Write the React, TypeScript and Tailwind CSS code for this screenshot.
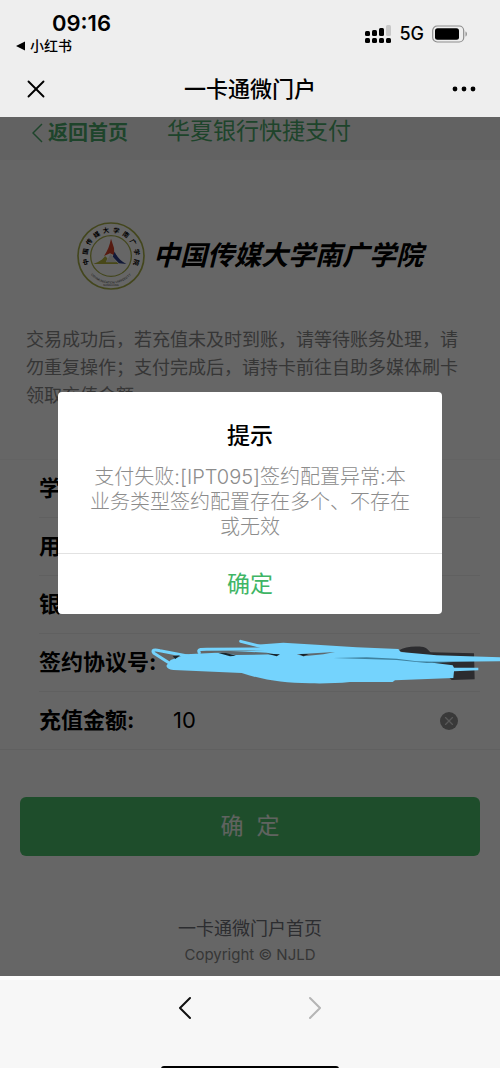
import React from 'react';
import { X } from 'lucide-react';

const logoChars = ['中', '国', '传', '媒', '大', '学', '南', '广', '学', '院'];

const hiddenRows = ['学', '用', '银'];

const StatusBar = () => {
  return <div className="flex h-15 items-start justify-between pl-4 pr-8">
      <div>
        <div className="mt-2 pl-9 text-[22px] leading-[30px] font-semibold">09:16</div>
        <div className="flex h-4 items-center gap-1 text-sm leading-5 font-medium">
          <svg className="h-2.5 w-2.5" viewBox="0 0 10 10">
            <path d="M0 5 9 0.5V9.5Z" fill="#000" />
          </svg>
          小红书
        </div>
      </div>
      <div className="mt-5 flex h-7 items-center gap-2">
        <svg className="h-5 w-[26px]" viewBox="0 0 26 20">
          <rect x="0" y="7" width="5" height="5" rx="1.5" />
          <rect x="7" y="6" width="5" height="6" rx="1.5" />
          <rect x="14" y="4" width="5" height="8" rx="1.5" />
          <rect x="21" y="1" width="5" height="11" rx="1.5" fill="#c8c8c8" />
          <rect x="0" y="14" width="5" height="5" rx="1.5" />
          <rect x="7" y="14" width="5" height="5" rx="1.5" />
          <rect x="14" y="14" width="5" height="5" rx="1.5" />
          <rect x="21" y="14" width="5" height="5" rx="1.5" />
        </svg>
        <span className="text-lg font-medium">5G</span>
        <svg className="h-[18px] w-9" viewBox="0 0 36 18">
          <rect x="0.7" y="1" width="31" height="16" rx="4.5" fill="none" stroke="#8d8d8d" strokeWidth="1.2" />
          <rect x="3" y="3.3" width="24" height="11.4" rx="2.5" />
          <path d="M33.5 6.5C35.4 7 35.4 11 33.5 11.5Z" fill="#8d8d8d" />
        </svg>
      </div>
    </div>;
};

const NavBar = () => {
  return <header className="grid h-[57px] grid-cols-[1fr_auto_1fr] items-center px-6">
      <button type="button" aria-label="关闭" className="justify-self-start">
        <X className="h-6 w-6 scale-125" strokeWidth={1.5} />
      </button>
      <h1 className="text-[22px] leading-7 font-medium">一卡通微门户</h1>
      <button type="button" aria-label="更多" className="justify-self-end">
        <svg className="h-6 w-6" viewBox="0 0 24 24">
          <circle cx="3" cy="12" r="2.4" />
          <circle cx="12" cy="12" r="2.4" />
          <circle cx="21" cy="12" r="2.4" />
        </svg>
      </button>
    </header>;
};

const Emblem = () => {
  return <svg className="h-[68px] w-[68px] shrink-0" viewBox="0 0 204 204">
      <circle cx="102" cy="102" r="99" fill="none" stroke="#a9b04a" strokeWidth="5" />
      <circle cx="102" cy="102" r="61" fill="none" stroke="#a9b04a" strokeWidth="4" />
      {logoChars.map((char, i) => <text key={i} x="102" y="31" fontSize="19" fontWeight="700" textAnchor="middle" transform={`rotate(${-103 + i * 23} 102 102)`}>
          {char}
        </text>)}
      <path id="emblem-arc" d="M31 144A82 82 0 0 0 173 144" fill="none" />
      <text fontSize="9" fill="#444">
        <textPath href="#emblem-arc" startOffset="50%" textAnchor="middle">COMMUNICATION UNIVERSITY</textPath>
      </text>
      <text x="102" y="192" fontSize="8" fill="#555" textAnchor="middle">NANGUANG</text>
      <path d="M102 50C98 70 92 86 81 102L99 94 112 100 111 78Z" fill="#d8452c" />
      <path d="M49 126C68 119 78 112 84 102L91 109 87 120H119L125 126Z" fill="#b3b43c" />
      <path d="M113 89C120 106 132 118 148 126L126 124 107 104Z" fill="#2d3f8c" />
      <path d="M101 95 87 121H119Z" fill="#e4e4df" />
    </svg>;
};

// hand-drawn marker hiding the agreement number
const Scribble = () => {
  return <svg className="pointer-events-none absolute -top-1 right-0 z-20 h-[60px] w-[350px]" viewBox="0 0 1050 180">
      <path d="M745 62C765 50 790 48 820 51C832 54 836 62 842 67L972 70 974 148 905 150 840 90Z" fill="#2c2c2f" />
      <path d="M50 106 62 90 108 73 200 68 345 60 318 44 400 38 500 44 620 52 745 57 752 66 860 76 1050 82V94L830 96 908 106 912 113 985 113V121L912 124 910 144 735 151 728 156 600 156C560 160 520 161 480 160C400 160 340 150 275 129L70 120C56 118 48 112 50 106Z" fill="#74d3fd" />
      <g fill="none" stroke="#74d3fd" strokeLinecap="round" strokeLinejoin="round" strokeWidth="9">
        <path d="M66 104 12 70C4 60 12 58 30 62L112 78" />
        <path d="M148 68C142 58 152 58 170 58L350 57" />
        <path d="M272 34 350 54" />
      </g>
      <path d="M176 64 290 65 350 68 375 73 255 75 222 70Z" fill="#5f696e" />
      <path d="M440 73 555 66 520 73 460 79Z" fill="#5f696e" />
      <path d="M205 69 228 69 258 77 240 79ZM352 71 390 73 380 79ZM448 72 476 72 460 79Z" fill="#17242c" />
      <path d="M550 84 650 82 740 86 800 94 910 97 830 99 740 90Z" fill="#3f819e" />
      <path d="M68 79 90 76 76 87Z" fill="#17242c" />
    </svg>;
};

const PaymentForm = () => {
  return <form>
      <div className="mt-[49px] border-t border-[#f7f7f7]">
        {hiddenRows.map(label => <div key={label} className="ml-[39px] mr-5 flex h-[58px] items-center border-b border-[#f0f0f0] text-[22px] font-bold">
            {label}
          </div>)}
        <div className="relative pl-[39px] pr-5">
          <div className="flex h-[58px] items-center border-b border-[#f0f0f0] text-[22px] font-bold">签约协议号:</div>
          <Scribble />
        </div>
        <div className="flex h-[58px] items-center border-b border-[#f0f0f0] pl-[39px] pr-[42px]">
          <label htmlFor="amount" className="w-[134px] shrink-0 text-[22px] font-bold">充值金额:</label>
          <input id="amount" type="text" defaultValue="10" className="min-w-0 flex-1 bg-transparent text-[22px] outline-none" />
          <button type="button" aria-label="清除" className="flex h-[18px] w-[18px] items-center justify-center rounded-full bg-[#8f8f8f] text-[#ddd]">
            <X className="h-3.5 w-3.5" strokeWidth={2} />
          </button>
        </div>
      </div>
      <button type="button" className="mx-5 mt-[47px] flex h-[59px] w-[calc(100%-40px)] items-center justify-center rounded-md bg-[#4dc16c] text-[23px] whitespace-pre text-[#f0f8f0]">
        确  定
      </button>
    </form>;
};

const AlertDialog = () => {
  return <div className="absolute inset-0 z-10 flex items-start justify-center bg-black/60 px-[58px] pt-[275px]">
      <div role="alertdialog" aria-labelledby="alert-title" className="w-full rounded bg-white text-center">
        <h2 id="alert-title" className="pt-7 text-[23px] leading-8 font-medium">提示</h2>
        <p className="mt-[13px] mb-[13px] px-8 text-xl leading-[25px] font-light text-[#8c8c8c]">
          支付失败:[IPT095]签约配置异常:本业务类型签约配置存在多个、不存在或无效
        </p>
        <button type="button" className="h-[61px] w-full border-t border-[#e2e2e2] text-[23px] text-[#3fb565]">确定</button>
      </div>
    </div>;
};

export default function App() {
  return <div className="flex min-h-screen flex-col bg-[#eee] font-[Inter,'Noto_Sans_CJK_SC',sans-serif] text-black">
      <StatusBar />
      <NavBar />
      <main className="relative bg-white">
        <div className="flex h-[43px] items-start bg-[#f6f6f6] pl-8">
          <a href="#" className="flex h-8 items-center gap-1 text-xl font-bold text-[#4dab6c]">
            <svg className="h-5 w-3" viewBox="0 0 12 20" fill="none" stroke="currentColor" strokeWidth="1.5">
              <path d="M10 1 1 10 10 19" />
            </svg>
            返回首页
          </a>
          <h2 className="ml-[39px] text-[23px] leading-7 text-[#4dab6c]">华夏银行快捷支付</h2>
        </div>
        <div className="flex items-center justify-center gap-2 pt-[62px]">
          <Emblem />
          <div className="text-[27px] leading-9 font-bold whitespace-nowrap italic">中国传媒大学南广学院</div>
        </div>
        <p className="mx-[26px] mt-9 text-lg leading-7 text-[#888]">
          交易成功后，若充值未及时到账，请等待账务处理，请勿重复操作；支付完成后，请持卡前往自助多媒体刷卡领取充值金额
        </p>
        <PaymentForm />
        <footer className="mt-[60px] pb-2 text-center leading-[26px]">
          <a href="#" className="block text-lg leading-[26px] text-[#6f7078]">一卡通微门户首页</a>
          <p className="text-[15px] leading-[26px] text-[#888]">Copyright © NJLD</p>
        </footer>
        <AlertDialog />
      </main>
      <nav className="relative flex h-[93px] items-start justify-center gap-[106px] overflow-hidden border-t-4 border-white bg-[#f7f7f7] pt-4">
        <button type="button" aria-label="后退">
          <svg className="h-6 w-6" viewBox="0 0 24 24" fill="none" stroke="#111" strokeWidth="2" strokeLinecap="round" strokeLinejoin="round">
            <path d="M17 2 7 12 17 22" />
          </svg>
        </button>
        <button type="button" aria-label="前进">
          <svg className="h-6 w-6" viewBox="0 0 24 24" fill="none" stroke="#b5b5b5" strokeWidth="2" strokeLinecap="round" strokeLinejoin="round">
            <path d="M7 2 17 12 7 22" />
          </svg>
        </button>
        <div className="absolute bottom-0 left-1/2 h-[3px] w-[178px] -translate-x-1/2 rounded-t-sm bg-black" />
      </nav>
    </div>;
}
